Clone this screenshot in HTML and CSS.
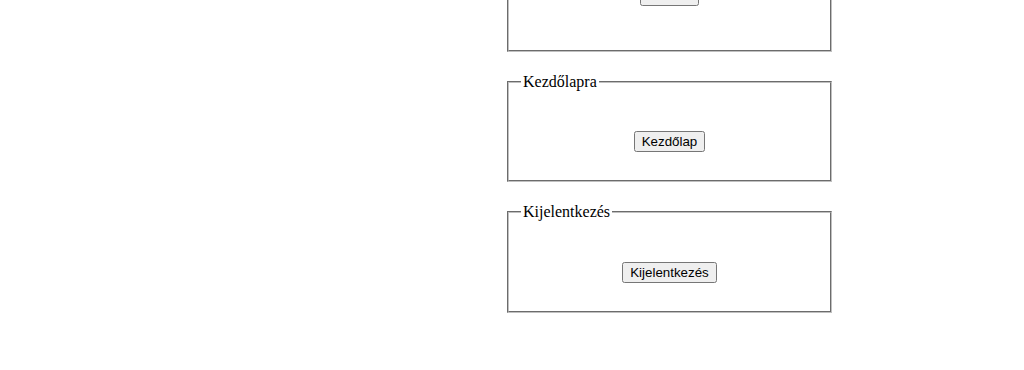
FILE: index.html
```html
<!DOCTYPE html>
<html lang="hu">
<head>
  <meta charset="UTF-8" />
  <meta name="viewport" content="width=device-width, initial-scale=1.0"/>
  <title>Beállítások</title>
  <link rel="stylesheet" href="styles.css">
</head>
<body>
  <div class="frame">
    <div class="panel">
      <fieldset class="box">
        <legend>Jelszó módosítása</legend>
        <div class="action first">
          <button type="button">Mentés</button>
        </div>
        <div class="spacer"></div>
      </fieldset>

      <fieldset class="box">
        <legend>Kezdőlapra</legend>
        <div class="action">
          <button type="button" onclick="location.href='index.html'">Kezdőlap</button>
        </div>
      </fieldset>

      <fieldset class="box">
        <legend>Kijelentkezés</legend>
        <div class="action">
          <button type="button">Kijelentkezés</button>
        </div>
      </fieldset>
    </div>
  </div>
</body>
</html>
```

FILE: styles.css
```css
body {
  margin: 0;
  font-family: "Liberation Serif", "Times New Roman", serif;
  font-size: 16px;
  background: #fff;
  color: #000;
}

/* the page is shown scrolled a bit down */
.frame {
  height: 370px;
  overflow: hidden;
}

.panel {
  display: flex;
  flex-direction: column;
  gap: 21px;
  width: 325px;
  margin: -76px 0 0 507px;
}

.box {
  margin: 0;
  width: 297px;
  padding: 0.35em 0.75em 0.625em;
  border: 2px groove #c0c0c0;
}

.box legend {
  padding: 0 2px;
  line-height: normal;
}

.action {
  text-align: center;
  padding: 35px 0 18px;
}

.action.first {
  padding-top: 37px;
}

.action button {
  font: 13.333px "Liberation Sans", Arial, sans-serif;
}

.spacer {
  height: 16px;
}
```
